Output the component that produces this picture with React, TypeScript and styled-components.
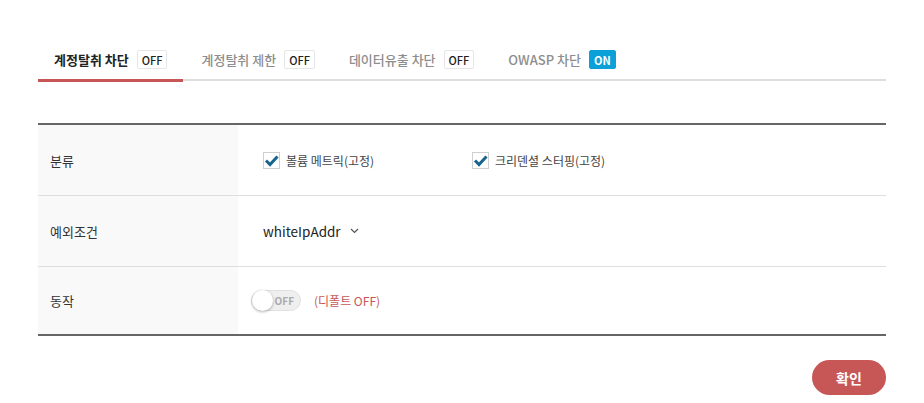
import styled, { createGlobalStyle } from "styled-components";

const GlobalStyle = createGlobalStyle`
  html, body {
    margin: 0;
    padding: 0;
    background: #fff;
    font-family: "Noto Sans CJK KR", "Noto Sans", sans-serif;
    color: #333;
  }
`;

const Page = styled.div`
  padding: 40px 38px 0 38px;
  width: 848px;
`;

const TabList = styled.div`
  display: flex;
  gap: 2px;
  border-bottom: 2px solid #dedede;
`;

const Tab = styled.div<{ $active?: boolean }>`
  display: flex;
  align-items: center;
  gap: 8px;
  height: 39px;
  padding: 0 16px;
  margin-bottom: -3px;
  border-bottom: 3px solid ${(p) => (p.$active ? "#c75757" : "transparent")};
  font-size: 13px;
  font-weight: ${(p) => (p.$active ? 700 : 500)};
  color: ${(p) => (p.$active ? "#222" : "#8e8e8e")};
  cursor: pointer;
`;

const Badge = styled.span<{ $on?: boolean }>`
  display: inline-flex;
  align-items: center;
  justify-content: center;
  height: 17px;
  padding: 0 4px;
  font-size: 11px;
  font-weight: ${(p) => (p.$on ? 700 : 500)};
  border-radius: 2px;
  border: 1px solid ${(p) => (p.$on ? "#0ba0d8" : "#e6e6e6")};
  background: ${(p) => (p.$on ? "#0ba0d8" : "#fff")};
  color: ${(p) => (p.$on ? "#fff" : "#222")};
`;

const Table = styled.div`
  margin-top: 42px;
  border-top: 2px solid #666;
  border-bottom: 2px solid #666;
`;

const Row = styled.div<{ $h: number; $last?: boolean }>`
  display: grid;
  grid-template-columns: 200px 1fr;
  height: ${(p) => p.$h}px;
  border-bottom: ${(p) => (p.$last ? "none" : "1px solid #dedede")};
`;

const Label = styled.div`
  display: flex;
  align-items: center;
  padding-left: 12px;
  background: #f9f9f9;
  font-size: 13px;
  color: #333;
`;

const Value = styled.div<{ $pad?: number }>`
  display: flex;
  align-items: center;
  padding-left: ${(p) => p.$pad ?? 25}px;
`;

const CheckGroup = styled.label`
  display: flex;
  align-items: center;
  gap: 6px;
  width: 209px;
  font-size: 12px;
  color: #444;
`;

const Box = styled.span`
  width: 15px;
  height: 15px;
  border: 1px solid #cfcfcf;
  background: #fff;
  display: inline-flex;
  align-items: center;
  justify-content: center;
`;

const Check = () => (
  <Box>
    <svg width="15" height="15" viewBox="0 0 15 15">
      <path d="M2 7.5 L6 11.5 L13.5 3.5" fill="none" stroke="#17648f" strokeWidth="3" />
    </svg>
  </Box>
);

const Select = styled.div`
  display: flex;
  align-items: center;
  gap: 9px;
  font-size: 13.5px;
  color: #222;
`;

const ToggleWrap = styled.div`
  display: flex;
  align-items: center;
  gap: 13px;
`;

const Toggle = styled.div`
  position: relative;
  width: 50px;
  height: 21px;
  border-radius: 11px;
  background: #efefef;
  border: 1px solid #e0e0e0;
  display: flex;
  align-items: center;
  justify-content: flex-end;
  padding-right: 6px;
  box-sizing: border-box;
  font-size: 10px;
  font-weight: 700;
  color: #aaa;
`;

const Knob = styled.span`
  position: absolute;
  left: 0;
  top: -1px;
  width: 21px;
  height: 21px;
  border-radius: 50%;
  background: #fff;
  box-shadow: 0 1px 3px rgba(0, 0, 0, 0.3);
`;

const Hint = styled.span`
  font-size: 12px;
  color: #c75757;
`;

const Footer = styled.div`
  display: flex;
  justify-content: flex-end;
  margin-top: 24px;
`;

const ConfirmButton = styled.button`
  width: 74px;
  height: 35px;
  border: none;
  border-radius: 18px;
  background: #c75757;
  color: #fff;
  font-family: inherit;
  font-size: 14px;
  font-weight: 700;
`;

const tabs = [
  { name: "계정탈취 차단", on: false, active: true },
  { name: "계정탈취 제한", on: false },
  { name: "데이터유출 차단", on: false },
  { name: "OWASP 차단", on: true },
];

export default function App() {
  return (
    <>
      <GlobalStyle />
      <Page>
        <TabList>
          {tabs.map((t) => (
            <Tab key={t.name} $active={t.active}>
              {t.name}
              <Badge $on={t.on}>{t.on ? "ON" : "OFF"}</Badge>
            </Tab>
          ))}
        </TabList>

        <Table>
          <Row $h={70}>
            <Label>분류</Label>
            <Value>
              <CheckGroup>
                <Check />
                볼륨 메트릭(고정)
              </CheckGroup>
              <CheckGroup>
                <Check />
                크리덴셜 스터핑(고정)
              </CheckGroup>
            </Value>
          </Row>
          <Row $h={70}>
            <Label>예외조건</Label>
            <Value>
              <Select>
                whiteIpAddr
                <svg width="9" height="6" viewBox="0 0 9 6">
                  <path d="M1 1 L4.5 4.5 L8 1" fill="none" stroke="#555" strokeWidth="1.2" />
                </svg>
              </Select>
            </Value>
          </Row>
          <Row $h={67} $last>
            <Label>동작</Label>
            <Value $pad={13}>
              <ToggleWrap>
                <Toggle>
                  <Knob />
                  OFF
                </Toggle>
                <Hint>(디폴트 OFF)</Hint>
              </ToggleWrap>
            </Value>
          </Row>
        </Table>

        <Footer>
          <ConfirmButton>확인</ConfirmButton>
        </Footer>
      </Page>
    </>
  );
}
